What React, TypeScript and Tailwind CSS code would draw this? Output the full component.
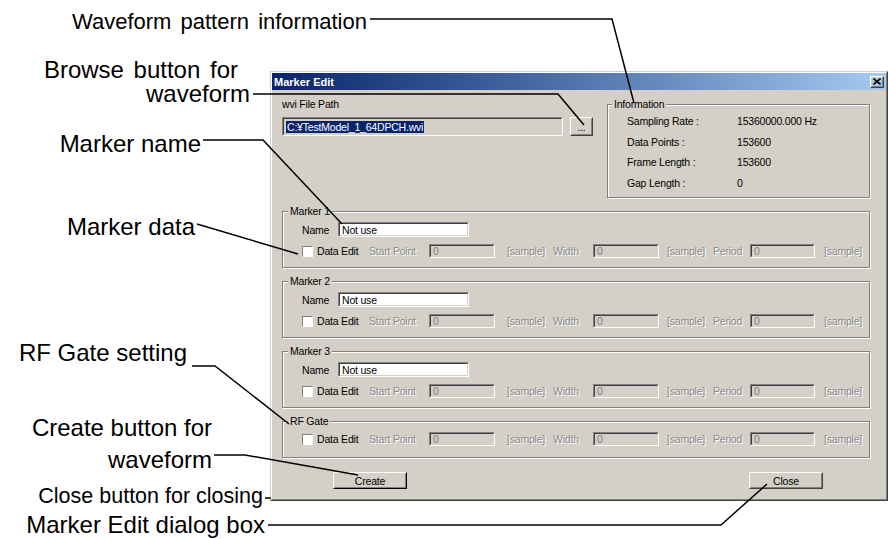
import React from "react";

const ui = "font-['Liberation_Sans',Arial,sans-serif] text-[10.5px] leading-[12px] tracking-[-0.2px]";
const dim = "text-[#8a8a8a] [text-shadow:1px_1px_0_#ffffff]";

function Sunken({ className = "", white = false, children }: { className?: string; white?: boolean; children?: React.ReactNode }) {
  return (
    <div className={`border border-[#808080] border-r-white border-b-white ${className}`}>
      <div
        className={`h-full border border-[#404040] border-r-[#d4d0c8] border-b-[#d4d0c8] flex items-center pl-[2px] overflow-hidden whitespace-nowrap ${
          white ? "bg-white text-black" : "bg-[#d4d0c8] text-[#808080]"
        }`}
      >
        {children}
      </div>
    </div>
  );
}

function Raised({ className = "", dark = false, children }: { className?: string; dark?: boolean; children?: React.ReactNode }) {
  return (
    <div className={`border border-white ${dark ? "border-r-black border-b-black" : "border-r-[#404040] border-b-[#404040]"} ${className}`}>
      <div className="h-full border border-[#d4d0c8] border-r-[#808080] border-b-[#808080] flex items-center justify-center text-black">
        {children}
      </div>
    </div>
  );
}

function Group({ title, className = "", pad = "px-[5px]", children }: { title: string; className?: string; pad?: string; children?: React.ReactNode }) {
  return (
    <fieldset className={`border border-[#808080] shadow-[inset_1px_1px_0_#ffffff,1px_1px_0_#ffffff] ${pad} ${className}`}>
      <legend className="relative px-[2px] bg-[#d4d0c8] text-black">{title}</legend>
      {children}
    </fieldset>
  );
}

function DataRow() {
  return (
    <div className="flex items-center h-[14px] pl-[14px]">
      <div className="w-[15px] flex items-center">
        <div className="w-[11px] h-[11px] bg-white border border-[#808080] border-r-white border-b-white" />
      </div>
      <div className="w-[52px] text-black">Data Edit</div>
      <div className={`w-[60px] ${dim}`}>Start Point</div>
      <Sunken className="w-[66px] h-[14px]">0</Sunken>
      <div className={`ml-[12px] w-[46px] ${dim}`}>[sample]</div>
      <div className={`w-[40px] ${dim}`}>Width</div>
      <Sunken className="w-[66px] h-[14px]">0</Sunken>
      <div className={`ml-[8px] w-[46px] ${dim}`}>[sample]</div>
      <div className={`w-[37px] ${dim}`}>Period</div>
      <Sunken className="w-[65px] h-[14px]">0</Sunken>
      <div className={`ml-[9px] ${dim}`}>[sample]</div>
    </div>
  );
}

function MarkerGroup({ n }: { n: number }) {
  return (
    <Group title={`Marker ${n}`} className="w-[588px] h-[63px] mt-[7px]">
      <div className="flex items-center h-[15px] mt-[5px] pl-[14px]">
        <div className="w-[36px] text-black">Name</div>
        <Sunken white className="w-[131px] h-[15px]">
          Not use
        </Sunken>
      </div>
      <div className="mt-[7px]">
        <DataRow />
      </div>
    </Group>
  );
}

const info = [
  ["Sampling Rate :", "15360000.000 Hz"],
  ["Data Points :", "153600"],
  ["Frame Length :", "153600"],
  ["Gap Length :", "0"],
];

function Dialog() {
  return (
    <div className={`mt-[71px] w-[618px] h-[430px] border border-[#d4d0c8] border-r-[#404040] border-b-[#404040] ${ui}`}>
      <div className="h-full border border-white border-r-[#808080] border-b-[#808080] bg-[#d4d0c8] flex flex-col">
        <div className="h-[17px] flex items-center justify-between bg-gradient-to-r from-[#0a246a] to-[#a6caf0] pl-[2px] pr-[2px]">
          <span className="font-bold text-[11px] tracking-normal text-white">Marker Edit</span>
          <Raised className="w-[14px] h-[12px]">
            <svg width="8" height="7" viewBox="0 0 8 7">
              <path d="M0.5 0.5 L7.5 6.5 M7.5 0.5 L0.5 6.5" stroke="#000" strokeWidth="1.6" />
            </svg>
          </Raised>
        </div>
        <div className="pl-[10px] pt-[8px]">
          <div className="flex">
            <div className="w-[311px]">
              <div className="text-black">wvi File Path</div>
              <div className="flex mt-[7px]">
                <Sunken className="w-[281px] h-[19px]">
                  <span className="bg-[#0a246a] text-white px-[1px]">C:¥TestModel_1_64DPCH.wvi</span>
                </Sunken>
                <Raised className="ml-[7px] w-[23px] h-[19px]">...</Raised>
              </div>
            </div>
            <Group title="Information" pad="px-[4px]" className="ml-[14px] w-[263px] h-[100px]">
              <div className="pl-[15px] flex flex-col">
                {info.map(([k, v], i) => (
                  <div key={k} className={`flex items-center h-[20.5px] text-black ${i === 0 ? "mt-[1px]" : ""}`}>
                    <div className="w-[110px]">{k}</div>
                    <div>{v}</div>
                  </div>
                ))}
              </div>
            </Group>
          </div>
          <MarkerGroup n={1} />
          <MarkerGroup n={2} />
          <MarkerGroup n={3} />
          <Group title="RF Gate" className="w-[588px] h-[43px] mt-[7px]">
            <div className="mt-[5px]">
              <DataRow />
            </div>
          </Group>
          <div className="flex mt-[14px]">
            <Raised dark className="ml-[51px] w-[74px] h-[17px]">Create</Raised>
            <Raised className="ml-[342px] w-[74px] h-[17px]">Close</Raised>
          </div>
        </div>
      </div>
    </div>
  );
}

const big = "font-['Liberation_Sans',Arial,sans-serif] text-black whitespace-nowrap";

export default function App() {
  return (
    <div className="relative w-[888px] h-[539px] bg-white overflow-hidden flex">
      <div className={`w-[270px] shrink-0 flex flex-col ${big}`}>
        <div className="text-[22px] leading-[22px] mt-[11px] ml-[72px] [word-spacing:3px]">Waveform pattern information</div>
        <div className="text-[24px] leading-[24px] mt-[25px] self-end mr-[32px] [word-spacing:3px]">Browse button for</div>
        <div className="text-[24px] leading-[24px] self-end mr-[20px]">waveform</div>
        <div className="text-[24px] leading-[24px] mt-[26px] self-end mr-[69px]">Marker name</div>
        <div className="text-[24px] leading-[24px] mt-[59px] self-end mr-[75px]">Marker data</div>
        <div className="text-[24px] leading-[24px] mt-[102px] self-end mr-[83px]">RF Gate setting</div>
        <div className="text-[24px] leading-[24px] mt-[51px] self-end mr-[58px]">Create button for</div>
        <div className="text-[24px] leading-[24px] mt-[8px] self-end mr-[58px]">waveform</div>
        <div className="text-[21.5px] leading-[21.5px] mt-[14px] self-end mr-[7px]">Close button for closing</div>
        <div className="text-[24px] leading-[24px] mt-[5px] self-end mr-[5px]">Marker Edit dialog box</div>
      </div>
      <Dialog />
      <svg className="absolute inset-0 pointer-events-none" width="888" height="539" viewBox="0 0 888 539">
        <g fill="none" stroke="#000" strokeWidth="1.5">
          <polyline points="370,19 612,19 634,103" />
          <polyline points="253,94 558,94 584,125" />
          <polyline points="203,140 263,140 342,224" />
          <polyline points="197,224 298,254" />
          <polyline points="192,366 215,366 289,424" />
          <polyline points="214,455 245,455 358,475" />
          <polyline points="265,498 271,498" />
          <polyline points="268,525 721,525 767,484" />
        </g>
      </svg>
    </div>
  );
}
